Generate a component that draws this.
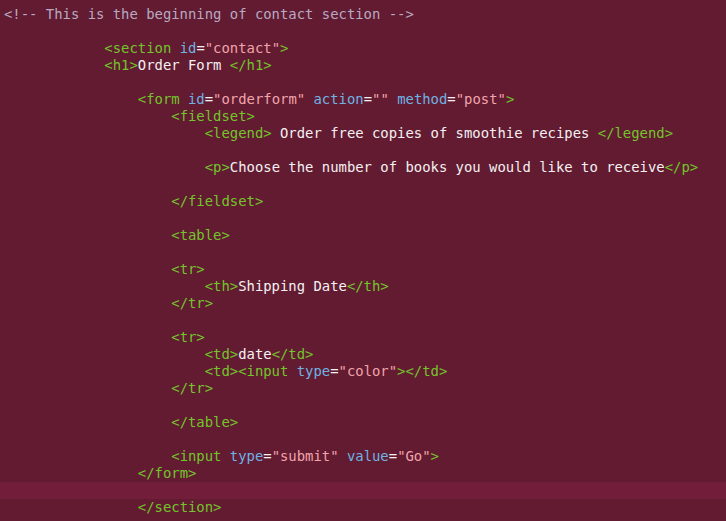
import React from "react";

type Tok = [string, string];

const T = "text-[#74c42c]"; // tag
const A = "text-[#70b2e2]"; // attribute
const S = "text-[#f2a4ac]"; // string
const W = "text-[#f4f0f2]"; // text
const C = "text-[#b9a9c2]"; // comment

const lines: Tok[][] = [
  [[C, "<!-- This is the beginning of contact section -->"]],
  [],
  [["", "            "], [T, "<section "], [A, "id"], [W, "="], [S, "\"contact\""], [T, ">"]],
  [["", "            "], [T, "<h1>"], [W, "Order Form "], [T, "</h1>"]],
  [],
  [["", "                "], [T, "<form "], [A, "id"], [W, "="], [S, "\"orderform\""], [W, " "], [A, "action"], [W, "="], [S, "\"\""], [W, " "], [A, "method"], [W, "="], [S, "\"post\""], [T, ">"]],
  [["", "                    "], [T, "<fieldset>"]],
  [["", "                        "], [T, "<legend>"], [W, " Order free copies of smoothie recipes "], [T, "</legend>"]],
  [],
  [["", "                        "], [T, "<p>"], [W, "Choose the number of books you would like to receive"], [T, "</p>"]],
  [],
  [["", "                    "], [T, "</fieldset>"]],
  [],
  [["", "                    "], [T, "<table>"]],
  [],
  [["", "                    "], [T, "<tr>"]],
  [["", "                        "], [T, "<th>"], [W, "Shipping Date"], [T, "</th>"]],
  [["", "                    "], [T, "</tr>"]],
  [],
  [["", "                    "], [T, "<tr>"]],
  [["", "                        "], [T, "<td>"], [W, "date"], [T, "</td>"]],
  [["", "                        "], [T, "<td><input "], [A, "type"], [W, "="], [S, "\"color\""], [T, "></td>"]],
  [["", "                    "], [T, "</tr>"]],
  [],
  [["", "                    "], [T, "</table>"]],
  [],
  [["", "                    "], [T, "<input "], [A, "type"], [W, "="], [S, "\"submit\""], [W, " "], [A, "value"], [W, "="], [S, "\"Go\""], [T, ">"]],
  [["", "                "], [T, "</form>"]],
  [],
  [["", "                "], [T, "</section>"]],
];

export default function App() {
  return (
    <div
      className="w-[726px] h-[521px] overflow-hidden bg-[#621b31] pt-[6px] pl-[4px] text-[13.9px] leading-[17px] whitespace-pre"
      style={{ fontFamily: '"DejaVu Sans Mono", "Liberation Mono", monospace' }}
    >
      {lines.map((ln, i) => (
        <div key={i} className={i === 28 ? "h-[17px] bg-[#721d3a] -ml-[4px] pl-[4px]" : "h-[17px]"}>
          {ln.map(([c, t], j) => (
            <span key={j} className={c}>
              {t}
            </span>
          ))}
        </div>
      ))}
    </div>
  );
}
